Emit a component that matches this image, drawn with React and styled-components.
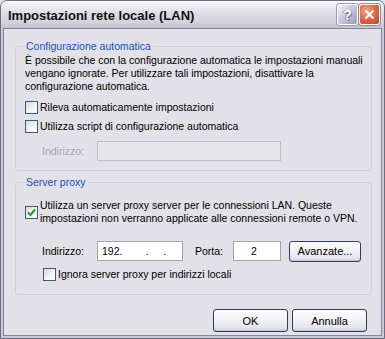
import React from "react";
import styled, { createGlobalStyle } from "styled-components";

const Global = createGlobalStyle`
  html, body { margin: 0; padding: 0; background: #e2e1e7; }
  body { width: 385px; height: 339px; overflow: hidden; }
  * { box-sizing: border-box; }
`;

const Window = styled.div`
  width: 385px;
  height: 339px;
  display: flex;
  flex-direction: column;
  border: 1px solid #6d6d85;
  border-radius: 7px 7px 0 0;
  background: #cacad7;
  overflow: hidden;
  font-family: "Liberation Sans", Arial, sans-serif;
  font-size: 10.5px;
  color: #000;
`;

const TitleBar = styled.div`
  height: 27px;
  flex: none;
  display: flex;
  align-items: center;
  gap: 1px;
  padding: 0 4px 0 7px;
  background: linear-gradient(
    to bottom,
    #ffffff 0%,
    #f0f0f4 12%,
    #dedee6 45%,
    #d2d2dc 80%,
    #c2c2cf 100%
  );
`;

const Title = styled.div`
  flex: 1;
  font-weight: bold;
  font-size: 13px;
  color: #111;
  padding-top: 1px;
`;

const CapButton = styled.div`
  width: 21px;
  height: 21px;
  border: 1px solid #fff;
  border-radius: 3px;
  display: flex;
  align-items: center;
  justify-content: center;
  background: ${(p) =>
    p.$close
      ? "radial-gradient(circle at 35% 30%, #f1a58e 0%, #de6c4f 45%, #c2412a 100%)"
      : "linear-gradient(135deg, #f3f3f8 0%, #c3c5d8 50%, #979ab4 100%)"};
  box-shadow: 0 0 0 1px ${(p) => (p.$close ? "#b9806f" : "#9a9aae")};
  color: #fff;
  font-weight: bold;
  font-size: 14px;
  text-shadow: 1px 1px 0 #7a7a90, -1px 0 0 #8a8aa0;
`;

const Client = styled.div`
  flex: 1;
  margin: 0 2px 2px;
  border: 1px solid #85859c;
  background: #e2e1e7;
  display: flex;
  flex-direction: column;
  padding: 0 9px 0 11px;
  white-space: nowrap;
`;

const Group = styled.fieldset`
  margin: ${(p) => p.$mt}px 0 0;
  padding: ${(p) => p.$pt}px 8px ${(p) => p.$pb}px 9px;
  border: 1px solid #cfcfda;
  border-radius: 3px;
  min-width: 0;
`;

const Legend = styled.legend`
  color: #1b4fc4;
  padding: 0 2px;
  margin-left: -1px;
  line-height: 13px;
`;

const Para = styled.p`
  margin: 0;
  line-height: 13px;
  letter-spacing: -0.02px;
`;

const CheckRow = styled.div`
  display: flex;
  align-items: center;
  gap: 2px;
  min-height: 19px;
  margin-top: ${(p) => p.$mt || 0}px;
  margin-left: ${(p) => p.$indent || 0}px;
  line-height: 13px;
`;

const Box = styled.span`
  width: 13px;
  height: 13px;
  flex: none;
  border: 1px solid #3a5a86;
  background: linear-gradient(135deg, #d8d8d6 0%, #f4f4f2 60%, #ffffff 100%);
  display: flex;
  align-items: center;
  justify-content: center;
`;

const FieldRow = styled.div`
  display: flex;
  align-items: center;
  height: 20px;
  margin-top: ${(p) => p.$mt}px;
  padding-left: 17px;
`;

const FieldLabel = styled.span`
  flex: none;
  width: ${(p) => p.$w}px;
  margin-left: ${(p) => p.$ml || 0}px;
  color: ${(p) => (p.$disabled ? "#a6a6ad" : "#000")};
`;

const Field = styled.div`
  flex: none;
  width: ${(p) => p.$w}px;
  height: 20px;
  border: 1px solid ${(p) => (p.$disabled ? "#bdbdc6" : "#a4a4b4")};
  background: ${(p) => (p.$disabled ? "#e6e5ea" : "#ffffff")};
  padding-left: ${(p) => p.$pl || 4}px;
  display: flex;
  align-items: center;
  white-space: pre;
`;

const Button = styled.div`
  flex: none;
  width: ${(p) => p.$w}px;
  height: ${(p) => p.$h}px;
  margin-left: ${(p) => p.$ml || 0}px;
  border: 1px solid #2c3f62;
  border-radius: 3px;
  background: linear-gradient(
    to bottom,
    #ffffff 0%,
    #f4f4f7 40%,
    #e4e4ec 85%,
    #cfd0dd 100%
  );
  box-shadow: inset 0 -1px 0 #c4c4d4;
  display: flex;
  align-items: center;
  justify-content: center;
  font-size: 11px;
`;

const Footer = styled.div`
  display: flex;
  justify-content: flex-end;
  gap: 4px;
  margin-top: 14px;
  padding-right: 5px;
`;

const Check = () => (
  <svg width="9" height="9" viewBox="0 0 9 9">
    <polyline
      points="1,4.5 3.5,7 8,1.5"
      fill="none"
      stroke="#21a121"
      strokeWidth="2"
    />
  </svg>
);

const CloseGlyph = () => (
  <svg width="11" height="11" viewBox="0 0 11 11">
    <path d="M1.5 1.5 L9.5 9.5 M9.5 1.5 L1.5 9.5" stroke="#fff" strokeWidth="2" />
  </svg>
);

export default function App() {
  return (
    <>
      <Global />
      <Window>
        <TitleBar>
          <Title>Impostazioni rete locale (LAN)</Title>
          <CapButton>?</CapButton>
          <CapButton $close>
            <CloseGlyph />
          </CapButton>
        </TitleBar>
        <Client>
          <Group $mt={11} $pt={1} $pb={9}>
            <Legend>Configurazione automatica</Legend>
            <Para>
              È possibile che con la configurazione automatica le impostazioni manuali
              <br />
              vengano ignorate. Per utilizzare tali impostazioni, disattivare la
              <br />
              configurazione automatica.
            </Para>
            <CheckRow $mt={5}>
              <Box />
              <span>Rileva automaticamente impostazioni</span>
            </CheckRow>
            <CheckRow>
              <Box />
              <span>Utilizza script di configurazione automatica</span>
            </CheckRow>
            <FieldRow $mt={5}>
              <FieldLabel $w={55} $disabled>
                Indirizzo:
              </FieldLabel>
              <Field $w={184} $disabled />
            </FieldRow>
          </Group>

          <Group $mt={5} $pt={10} $pb={10}>
            <Legend>Server proxy</Legend>
            <CheckRow>
              <Box>
                <Check />
              </Box>
              <span>
                Utilizza un server proxy server per le connessioni LAN. Queste
                <br />
                impostazioni non verranno applicate alle connessioni remote o VPN.
              </span>
            </CheckRow>
            <FieldRow $mt={16}>
              <FieldLabel $w={55}>Indirizzo:</FieldLabel>
              <Field $w={86}>{"192.        .     ."}</Field>
              <FieldLabel $w={38} $ml={12}>
                Porta:
              </FieldLabel>
              <Field $w={48} $pl={17}>
                2
              </Field>
              <Button $w={72} $h={21} $ml={8}>
                Avanzate...
              </Button>
            </FieldRow>
            <CheckRow $mt={4} $indent={18}>
              <Box />
              <span>Ignora server proxy per indirizzi locali</span>
            </CheckRow>
          </Group>

          <Footer>
            <Button $w={75} $h={23}>
              OK
            </Button>
            <Button $w={75} $h={23}>
              Annulla
            </Button>
          </Footer>
        </Client>
      </Window>
    </>
  );
}
